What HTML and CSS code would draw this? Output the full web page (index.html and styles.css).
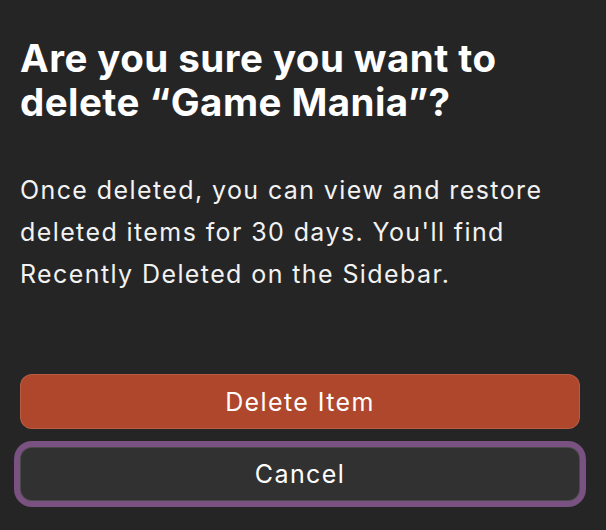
FILE: index.html
```html
<!DOCTYPE html>
<html lang="en">
<head>
<meta charset="utf-8">
<title>Delete item</title>
<link rel="stylesheet" href="styles.css">
</head>
<body>
<div class="dialog">
  <h1 class="title">Are you sure you want to delete “Game Mania”?</h1>
  <p class="message">Once deleted, you can view and restore deleted items for 30 days. You'll find Recently Deleted on the Sidebar.</p>
  <div class="actions">
    <button class="btn btn-danger" type="button">Delete Item</button>
    <button class="btn btn-secondary" type="button">Cancel</button>
  </div>
</div>
</body>
</html>
```

FILE: styles.css
```css
html, body {
  margin: 0;
  padding: 0;
  background: #252525;
}

body {
  font-family: Inter, "Noto Sans", "Liberation Sans", sans-serif;
  color: #ffffff;
}

.dialog {
  box-sizing: border-box;
  width: 606px;
  height: 530px;
  padding: 36px 26px 29px 20px;
  display: flex;
  flex-direction: column;
}

.title {
  margin: 0;
  font-size: 38.5px;
  line-height: 44px;
  font-weight: 700;
  letter-spacing: 0.45px;
  color: #ffffff;
}

.message {
  margin: 45px 0 0 0;
  font-size: 25px;
  line-height: 42px;
  font-weight: 400;
  letter-spacing: 1.4px;
  color: #f2f2f2;
}

.actions {
  margin-top: auto;
  display: flex;
  flex-direction: column;
  gap: 18px;
}

.btn {
  box-sizing: border-box;
  width: 100%;
  height: 55px;
  border-radius: 12px;
  font-family: inherit;
  font-size: 25px;
  font-weight: 400;
  letter-spacing: 1.4px;
  color: #ffffff;
  border: 1px solid rgba(255, 255, 255, 0.12);
  padding: 0;
  cursor: pointer;
}

.btn-danger {
  background: #ae472b;
}

.btn-secondary {
  height: 54px;
  background: #313131;
  box-shadow: 0 0 0 6px #7a5281;
}
```
